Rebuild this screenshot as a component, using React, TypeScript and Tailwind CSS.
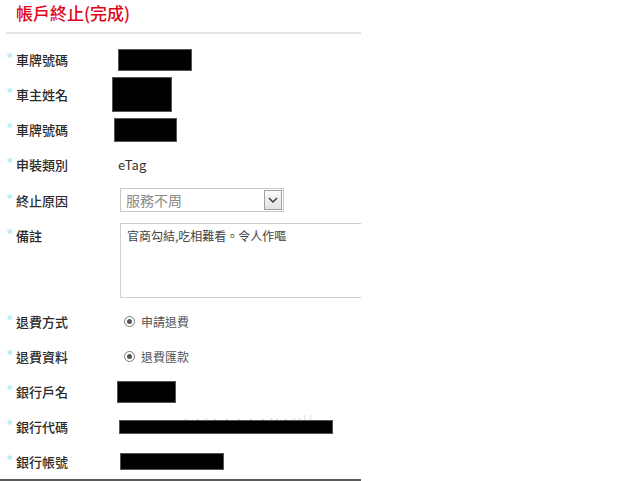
import React from "react";

const font = { fontFamily: '"Noto Sans CJK TC", "Noto Sans", sans-serif' };

const Label = ({ text }: { text: string }) => (
    <div className="flex w-[112px] shrink-0 items-start pl-[6px]">
        <span className="mt-[-2px] w-[10px] text-[14px] leading-none font-bold text-[#b4ecf8]">*</span>
        <span className="text-[13px] leading-none font-medium text-[#2b2b2b]">{text}</span>
    </div>
);

const Redact = ({ className }: { className: string }) => (
    <div className={`bg-black border border-[#555] ${className}`} />
);

const Radio = ({ text }: { text: string }) => (
    <div className="ml-[12px] flex items-center gap-[6px]">
        <span className="flex h-[11px] w-[11px] items-center justify-center rounded-full border border-[#777] bg-white">
            <span className="h-[5px] w-[5px] rounded-full bg-[#555]" />
        </span>
        <span className="text-[12px] leading-none text-[#555]">{text}</span>
    </div>
);

export default function App() {
    return (
        <div className="h-[481px] w-[640px] bg-white" style={font}>
            <div className="relative h-[481px] w-[361px] overflow-hidden">
                {/* Title */}
                <div className="ml-[6px] h-[34px] border-b-2 border-[#e4e4e4] pl-[10px] pt-[3px]">
                    <h1 className="text-[17px] leading-[20px] font-medium text-[#e2061b]">帳戶終止(完成)</h1>
                </div>

                <div className="pt-[8px]">
                    <div className="flex h-[35px] items-center">
                        <Label text="車牌號碼" />
                        <Redact className="ml-[6px] h-[22px] w-[74px]" />
                    </div>
                    <div className="flex h-[35px] items-center">
                        <Label text="車主姓名" />
                        <Redact className="h-[35px] w-[60px]" />
                    </div>
                    <div className="flex h-[35px] items-center">
                        <Label text="車牌號碼" />
                        <Redact className="ml-[2px] h-[24px] w-[63px]" />
                    </div>
                    <div className="flex h-[35px] items-center">
                        <Label text="申裝類別" />
                        <span className="ml-[6px] text-[13px] leading-none text-[#333]">eTag</span>
                    </div>
                    <div className="flex h-[35px] items-center pt-[1px]">
                        <Label text="終止原因" />
                        <div className="ml-[8px] flex h-[24px] w-[164px] items-center justify-between border border-[#c9c9c9] pl-[5px] pr-[1px]">
                            <span className="text-[14px] leading-none text-[#8a8a8a]">服務不周</span>
                            <span className="flex h-[20px] w-[18px] items-center justify-center border border-[#a0a0a0] bg-gradient-to-b from-[#fbfbfb] to-[#e2e2e2]">
                                <svg width="10" height="6" viewBox="0 0 10 6">
                                    <path d="M1 1l4 4 4-4" fill="none" stroke="#333" strokeWidth="1.4" />
                                </svg>
                            </span>
                        </div>
                    </div>

                    <div className="mt-[6px] flex items-start">
                        <div className="pt-[6px]">
                            <Label text="備註" />
                        </div>
                        <div className="ml-[8px] h-[75px] w-[260px] shrink-0 border border-[#cfcfcf] px-[6px] pt-[6px]">
                            <span className="block text-[12px] leading-none text-[#444]">官商勾結,吃相難看。令人作嘔</span>
                        </div>
                    </div>

                    <div className="mt-[6px] flex h-[35px] items-center">
                        <Label text="退費方式" />
                        <Radio text="申請退費" />
                    </div>
                    <div className="flex h-[35px] items-center">
                        <Label text="退費資料" />
                        <Radio text="退費匯款" />
                    </div>
                    <div className="flex h-[35px] items-center">
                        <Label text="銀行戶名" />
                        <Redact className="ml-[5px] h-[22px] w-[59px]" />
                    </div>
                    <div className="flex h-[35px] items-center">
                        <Label text="銀行代碼" />
                        <div className="relative ml-[7px] h-[14px] w-[214px]">
                            <span className="absolute left-[62px] top-[-5px] text-[9px] leading-none tracking-[3px] text-[#c8c8c8]">
                                ··ı·····ıı·ıı||ı·ı··ıı····ıı·ı
                            </span>
                            <Redact className="absolute inset-0" />
                        </div>
                    </div>
                    <div className="flex h-[35px] items-center">
                        <Label text="銀行帳號" />
                        <Redact className="ml-[8px] h-[17px] w-[104px]" />
                    </div>
                </div>

                <div className="absolute bottom-0 left-0 h-[2px] w-[361px] bg-[#5a5a5a]" />
            </div>
        </div>
    );
}
